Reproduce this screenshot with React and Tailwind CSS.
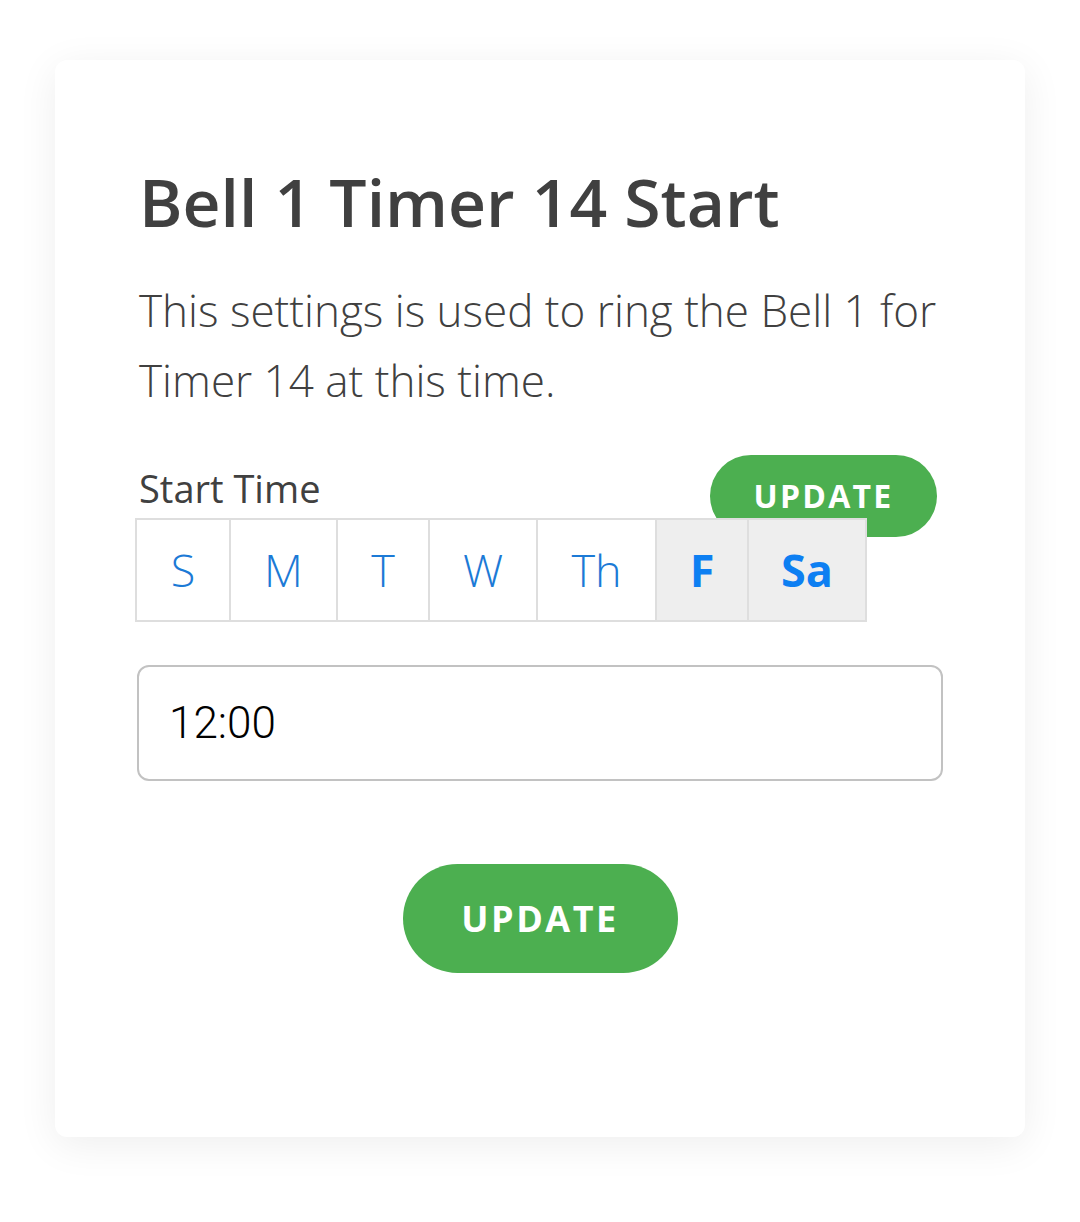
import React, { useState } from 'react';

const days = [
    { key: 'S', w: 'w-[92px]' },
    { key: 'M', w: 'w-[107px]' },
    { key: 'T', w: 'w-[92px]' },
    { key: 'W', w: 'w-[108px]' },
    { key: 'Th', w: 'w-[119px]' },
    { key: 'F', w: 'w-[92px]' },
    { key: 'Sa', w: 'w-[118px]' },
];

export default function App() {
    const [selected, setSelected] = useState(['F', 'Sa']);
    const [time, setTime] = useState('12:00');

    const toggle = (d) => {
        setSelected((s) => (s.includes(d) ? s.filter((x) => x !== d) : [...s, d]));
    };

    return (
        <div className="min-h-[1222px] w-[1080px] bg-white pt-[60px] px-[55px] font-['Open_Sans',sans-serif]">
            <div className="w-[970px] h-[1077px] bg-white rounded-xl shadow-[0_8px_40px_rgba(0,0,0,0.07)] pl-[84px] pr-[82px] pt-[97px]">
                {/* Title */}
                <h1 className="text-[66px] leading-[88px] font-semibold text-[#404040]">
                    Bell 1 Timer 14 Start
                </h1>
                <p className="mt-[30px] text-[44px] leading-[70px] font-light text-[#404040]">
                    This settings is used to ring the Bell 1 for Timer 14 at this time.
                </p>

                {/* Start time label + floating update */}
                <div className="relative mt-[48px]">
                    <div className="text-[38px] leading-[50px] text-[#404040]">Start Time</div>
                    <button className="absolute right-[6px] top-[-8px] w-[227px] h-[82px] rounded-full bg-[#4caf50] text-white text-[32px] font-bold tracking-[0.07em]">
                        UPDATE
                    </button>
                </div>

                {/* Day selector */}
                <div className="relative z-10 mt-[5px] -ml-[4px] flex w-fit border-2 border-[#dedede]">
                    {days.map((d, i) => {
                        const on = selected.includes(d.key);
                        return (
                            <button
                                key={d.key}
                                onClick={() => toggle(d.key)}
                                className={`${d.w} h-[100px] flex items-center justify-center text-[45px] ${i > 0 ? 'border-l-2 border-[#dedede]' : ''} ${on ? 'bg-[#eeeeee] font-bold text-[#0d7ff2]' : 'bg-white font-light text-[#1c7ad6]'}`}
                            >
                                {d.key}
                            </button>
                        );
                    })}
                </div>

                {/* Time input */}
                <input
                    value={time}
                    onChange={(e) => setTime(e.target.value)}
                    className="mt-[43px] -ml-[2px] block w-[806px] h-[116px] rounded-xl border-2 border-[#c2c2c2] px-[30px] text-[44px] font-light font-['Roboto',sans-serif] text-black outline-none"
                />

                {/* Main update */}
                <div className="flex justify-center mt-[83px] -ml-[2px]">
                    <button className="w-[275px] h-[109px] rounded-full bg-[#4caf50] text-white text-[36px] font-bold tracking-[0.07em]">
                        UPDATE
                    </button>
                </div>
            </div>
        </div>
    );
}
